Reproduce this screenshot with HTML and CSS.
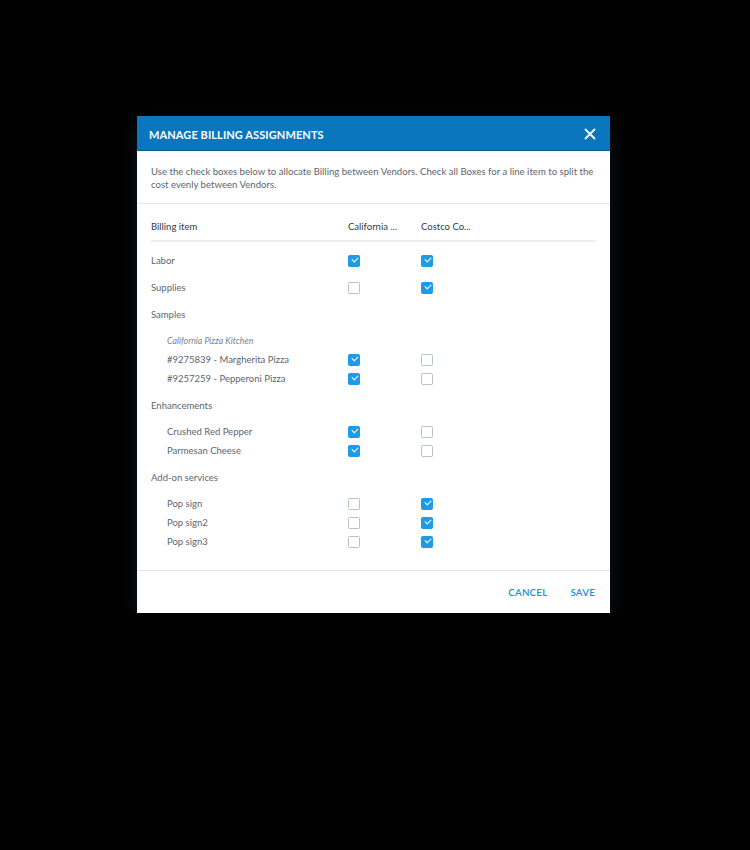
FILE: index.html
```html
<!DOCTYPE html>
<html>
<head>
<meta charset="utf-8">
<link rel="stylesheet" href="styles.css">
</head>
<body>
<div class="dialog">
  <div class="dlg-head">
    <div class="dlg-title">MANAGE BILLING ASSIGNMENTS</div>
    <svg class="close" width="12" height="12" viewBox="0 0 12 12"><path d="M1.5 1.5 L10.5 10.5 M10.5 1.5 L1.5 10.5" stroke="#fff" stroke-width="1.8" stroke-linecap="round"/></svg>
  </div>
  <div class="desc">Use the check boxes below to allocate Billing between Vendors. Check all Boxes for a line item to split the cost evenly between Vendors.</div>
  <div class="table">
    <div class="thead">
      <div class="c1">Billing item</div>
      <div class="c2">California ...</div>
      <div class="c3">Costco Co...</div>
    </div>
    <div class="tbody">
      <div class="row main"><div class="c1">Labor</div><div class="c2"><span class="cb on"></span></div><div class="c3"><span class="cb on"></span></div></div>
      <div class="row main"><div class="c1">Supplies</div><div class="c2"><span class="cb"></span></div><div class="c3"><span class="cb on"></span></div></div>
      <div class="row main"><div class="c1">Samples</div></div>
      <div class="row sub first"><div class="c1 vendor">California Pizza Kitchen</div></div>
      <div class="row sub"><div class="c1">#9275839 - Margherita Pizza</div><div class="c2"><span class="cb on"></span></div><div class="c3"><span class="cb"></span></div></div>
      <div class="row sub"><div class="c1">#9257259 - Pepperoni Pizza</div><div class="c2"><span class="cb on"></span></div><div class="c3"><span class="cb"></span></div></div>
      <div class="row main"><div class="c1">Enhancements</div></div>
      <div class="row sub first"><div class="c1">Crushed Red Pepper</div><div class="c2"><span class="cb on"></span></div><div class="c3"><span class="cb"></span></div></div>
      <div class="row sub"><div class="c1">Parmesan Cheese</div><div class="c2"><span class="cb on"></span></div><div class="c3"><span class="cb"></span></div></div>
      <div class="row main"><div class="c1">Add-on services</div></div>
      <div class="row sub first"><div class="c1">Pop sign</div><div class="c2"><span class="cb"></span></div><div class="c3"><span class="cb on"></span></div></div>
      <div class="row sub"><div class="c1">Pop sign2</div><div class="c2"><span class="cb"></span></div><div class="c3"><span class="cb on"></span></div></div>
      <div class="row sub"><div class="c1">Pop sign3</div><div class="c2"><span class="cb"></span></div><div class="c3"><span class="cb on"></span></div></div>
    </div>
  </div>
  <div class="foot">
    <span class="btn">CANCEL</span>
    <span class="btn">SAVE</span>
  </div>
</div>
</body>
</html>
```
FILE: styles.css
```css
html, body {
  margin: 0;
  padding: 0;
  background: #000;
}
body {
  padding: 116px 0 0 137px;
  font-family: Lato, "Open Sans", sans-serif;
}
.dialog {
  width: 473px;
  background: #fff;
  box-shadow: 0 6px 18px rgba(40, 60, 90, 0.35);
}
.dlg-head {
  height: 35px;
  background: #0a76be;
  border-bottom: 1px solid #075f9a;
  box-sizing: border-box;
  display: flex;
  align-items: center;
  justify-content: space-between;
  padding: 2px 14px 0 12px;
}
.dlg-title {
  color: #fff;
  font-weight: 700;
  font-size: 11px;
  letter-spacing: 0.1px;
}
.close {
  display: block;
}
.desc {
  padding: 14px 14px 12px 14px;
  font-size: 9.6px;
  line-height: 13px;
  color: #5b6670;
  border-bottom: 1px solid #e3e6e9;
}
.table {
  padding: 13px 14px 19px 14px;
  border-bottom: 1px solid #e3e6e9;
}
.thead {
  display: flex;
  align-items: center;
  height: 19px;
  padding-bottom: 4px;
  border-bottom: 2px solid #eceef0;
  font-size: 9.5px;
  color: #2f3b46;
}
.c1 {
  width: 197px;
}
.c2 {
  width: 73px;
  display: flex;
  align-items: center;
}
.c3 {
  display: flex;
  align-items: center;
}
.tbody {
  padding-top: 1px;
}
.row {
  display: flex;
  align-items: center;
  height: 19px;
  font-size: 9.5px;
  color: #5b6670;
}
.row.main {
  margin-top: 8px;
}
.row.sub.first {
  margin-top: 7px;
}
.row.sub .c1 {
  padding-left: 16px;
  width: 181px;
}
.row .c1.vendor {
  font-style: italic;
  font-size: 8.8px;
  color: #7a848d;
}
.cb {
  display: block;
  width: 10px;
  height: 10px;
  border: 1px solid #b9c2c9;
  border-radius: 1.5px;
  background: #fff;
  position: relative;
}
.cb.on {
  background: #1f9be6;
  border-color: #1f9be6;
}
.cb.on::after {
  content: "";
  position: absolute;
  left: 2.5px;
  top: 1.5px;
  width: 5px;
  height: 3px;
  border-left: 1.2px solid #fff;
  border-bottom: 1.2px solid #fff;
  transform: rotate(-45deg);
}
.foot {
  height: 42px;
  display: flex;
  align-items: center;
  justify-content: flex-end;
  gap: 23px;
  padding: 0 15px;
}
.btn {
  color: #1a8fe0;
  font-size: 9.8px;
  font-weight: 600;
  letter-spacing: 0.2px;
}
```
